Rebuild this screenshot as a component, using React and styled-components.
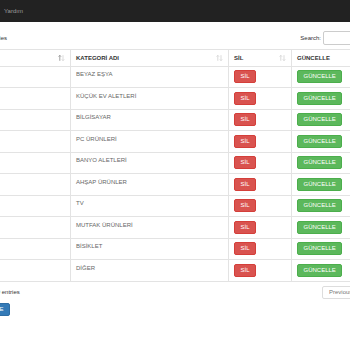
import React from "react";
import styled, { createGlobalStyle } from "styled-components";

const GlobalStyle = createGlobalStyle`
  html, body {
    margin: 0;
    padding: 0;
    background: #fff;
    overflow: hidden;
  }
  body {
    font-family: "Liberation Sans", Arial, sans-serif;
    font-size: 6px;
    color: #333;
  }
`;

const Shell = styled.div`
  margin-left: -58px;
  width: 459px;
`;

const Navbar = styled.nav`
  height: 22px;
  background: #222;
  display: flex;
  align-items: center;
  gap: 8px;
`;

const Brand = styled.a`
  color: #9d9d9d;
  font-size: 6px;
`;

const NavLink = styled.a`
  color: #9d9d9d;
  font-size: 6px;
`;

const Content = styled.div`
  padding: 0;
`;

const Controls = styled.div`
  display: flex;
  justify-content: space-between;
  align-items: center;
  margin-top: ${(p) => p.top || 0}px;
  height: ${(p) => p.h || 14}px;
`;

const Label = styled.label`
  display: flex;
  align-items: center;
  gap: 2px;
  color: #333;
  line-height: 13px;
`;

const Select = styled.select`
  width: 28px;
  height: 14px;
  font-size: 6px;
  border: 1px solid #ccc;
  border-radius: 2px;
  padding: 0 2px;
  background: #fff;
`;

const Input = styled.input`
  width: 78px;
  height: 14px;
  box-sizing: border-box;
  border: 1px solid #ccc;
  border-radius: 2px;
  font-size: 6px;
  padding: 0 3px;
`;

const Table = styled.table`
  margin-top: 4px;
  width: 100%;
  border-collapse: collapse;
  table-layout: fixed;
`;

const Th = styled.th`
  border: 1px solid #e3e3e3;
  padding: 3.5px 5px;
  line-height: 8.5px;
  font-weight: bold;
  text-align: left;
  color: #333;
  vertical-align: bottom;
`;

const HeadInner = styled.div`
  display: flex;
  justify-content: space-between;
  align-items: center;
`;

const Td = styled.td`
  border: 1px solid #e3e3e3;
  padding: 3.75px 5px;
  line-height: 8.5px;
  color: #666;
  vertical-align: top;
  white-space: nowrap;
`;

const Btn = styled.button`
  display: inline-block;
  vertical-align: top;
  height: 13px;
  line-height: 11px;
  padding: 0 5.5px;
  font-family: inherit;
  font-size: 6px;
  color: #fff;
  border-radius: 2px;
  border: 1px solid ${(p) => p.border};
  background: ${(p) => p.bg};
`;

const Info = styled.div`
  color: #333;
  line-height: 13px;
`;

const Pager = styled.ul`
  display: flex;
  list-style: none;
  margin: 0;
  padding: 0;
`;

const PageItem = styled.li`
  height: 13px;
  line-height: 11px;
  box-sizing: border-box;
  padding: 0 6px;
  border: 1px solid ${(p) => (p.active ? "#337ab7" : "#ddd")};
  margin-left: -1px;
  color: ${(p) => (p.active ? "#fff" : p.disabled ? "#777" : "#337ab7")};
  background: ${(p) => (p.active ? "#337ab7" : "#fff")};
  &:first-child {
    border-radius: 2px 0 0 2px;
    margin-left: 0;
  }
  &:last-child {
    border-radius: 0 2px 2px 0;
  }
`;

const AddButton = styled.button`
  display: block;
  margin-top: 4px;
  margin-left: 8px;
  height: 13px;
  padding: 0 5px;
  font-family: inherit;
  font-size: 6px;
  color: #fff;
  border: 1px solid #2e6da4;
  border-radius: 2px;
  background: #337ab7;
`;

const SortIcon = ({ active }) => (
  <svg width="7" height="6" viewBox="0 0 7 6">
    <path
      d="M1.8 5.8V0.4M0.6 1.6L1.8 0.4L3 1.6"
      stroke={active ? "#777" : "#ccc"}
      strokeWidth="0.7"
      fill="none"
    />
    <path
      d="M5 0.2V5.6M3.8 4.4L5 5.6L6.2 4.4"
      stroke="#ccc"
      strokeWidth="0.7"
      fill="none"
    />
  </svg>
);

const categories = [
  "BEYAZ EŞYA",
  "KÜÇÜK EV ALETLERİ",
  "BİLGİSAYAR",
  "PC ÜRÜNLERİ",
  "BANYO ALETLERİ",
  "AHŞAP ÜRÜNLER",
  "TV",
  "MUTFAK ÜRÜNLERİ",
  "BİSİKLET",
  "DİĞER",
];

const App = () => {
  return (
    <>
      <GlobalStyle />
      <Shell>
        <Navbar>
          <Brand>Admin</Brand>
          <NavLink>Kategoriler</NavLink>
          <NavLink>Yardım</NavLink>
        </Navbar>
        <Content>
          <Controls top={9}>
            <Label>
              Show
              <Select defaultValue="10">
                <option>10</option>
              </Select>
              entries
            </Label>
            <Label>
              Search:
              <Input type="search" />
            </Label>
          </Controls>
          <Table>
            <colgroup>
              <col style={{ width: 128 }} />
              <col style={{ width: 158 }} />
              <col style={{ width: 63 }} />
              <col />
            </colgroup>
            <thead>
              <tr>
                <Th>
                  <HeadInner>
                    ID
                    <SortIcon active />
                  </HeadInner>
                </Th>
                <Th>
                  <HeadInner>
                    KATEGORİ ADI
                    <SortIcon />
                  </HeadInner>
                </Th>
                <Th>
                  <HeadInner>
                    SİL
                    <SortIcon />
                  </HeadInner>
                </Th>
                <Th>GÜNCELLE</Th>
              </tr>
            </thead>
            <tbody>
              {categories.map((c, i) => (
                <tr key={c}>
                  <Td>{i + 1}</Td>
                  <Td>{c}</Td>
                  <Td>
                    <Btn bg="#d9534f" border="#d43f3a">
                      SİL
                    </Btn>
                  </Td>
                  <Td>
                    <Btn bg="#5cb85c" border="#4cae4c">
                      GÜNCELLE
                    </Btn>
                  </Td>
                </tr>
              ))}
            </tbody>
          </Table>
          <Controls top={4} h={13}>
            <Info>Showing 1 to 10 of 10 entries</Info>
            <Pager>
              <PageItem disabled>Previous</PageItem>
              <PageItem active>1</PageItem>
              <PageItem disabled>Next</PageItem>
            </Pager>
          </Controls>
          <AddButton>KATEGORİ EKLE</AddButton>
        </Content>
      </Shell>
    </>
  );
};

export default App;
